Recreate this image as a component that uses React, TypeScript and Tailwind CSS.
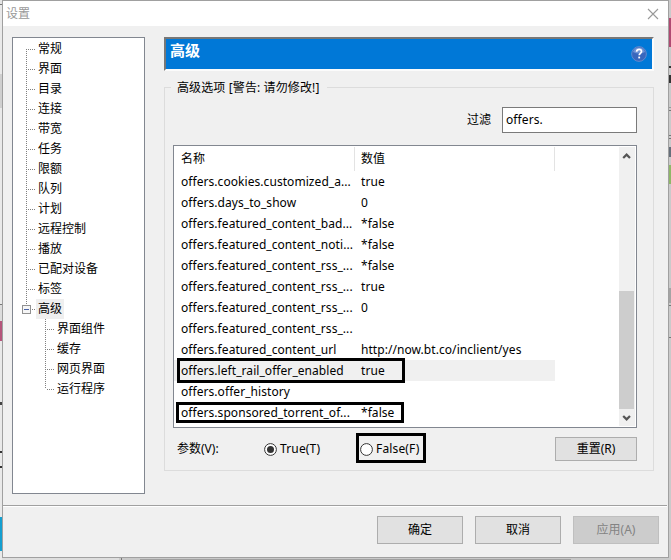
import React from "react";

interface Option {
  name: string;
  value: string;
  selected?: boolean;
}

const treeItems = [
  "常规", "界面", "目录", "连接", "带宽", "任务", "限额", "队列",
  "计划", "远程控制", "播放", "已配对设备", "标签",
];

const subItems = ["界面组件", "缓存", "网页界面", "运行程序"];

const options: Option[] = [
  { name: "offers.cookies.customized_a...", value: "true" },
  { name: "offers.days_to_show", value: "0" },
  { name: "offers.featured_content_bad...", value: "*false" },
  { name: "offers.featured_content_noti...", value: "*false" },
  { name: "offers.featured_content_rss_...", value: "*false" },
  { name: "offers.featured_content_rss_...", value: "true" },
  { name: "offers.featured_content_rss_...", value: "0" },
  { name: "offers.featured_content_rss_...", value: "" },
  { name: "offers.featured_content_url", value: "http://now.bt.co/inclient/yes" },
  { name: "offers.left_rail_offer_enabled", value: "true", selected: true },
  { name: "offers.offer_history", value: "" },
  { name: "offers.sponsored_torrent_of...", value: "*false" },
];

const vDots =
  "w-px bg-[repeating-linear-gradient(to_bottom,#808080_0_1px,transparent_1px_2px)]";
const hDots =
  "h-px bg-[repeating-linear-gradient(to_right,#808080_0_1px,transparent_1px_2px)]";

const LeftEdge: React.FC = () => (
  <div className="flex h-[560px] w-0.5 shrink-0 flex-col bg-[#e9e9e9]">
    <div className="h-1 bg-[#e4e4e4]" />
    <div className="h-px bg-[#777]" />
    <div className="h-[69px]" />
    <div className="h-[34px] bg-[#cfcfcf]" />
    <div className="h-[196px]" />
    <div className="h-px bg-[#777]" />
    <div className="h-4 bg-[#dcdcdc]" />
    <div className="h-5 bg-[#b5557b]" />
    <div className="h-[61px]" />
    <div className="h-[3px] bg-[#444]" />
    <div className="h-[46px]" />
    <div className="h-0.5 bg-[#333]" />
    <div className="h-[13px]" />
    <div className="h-0.5 bg-[#333]" />
    <div className="h-[49px]" />
    <div className="h-[34px] bg-[#149fd0]" />
  </div>
);

const RightEdge: React.FC = () => (
  <div className="flex h-[560px] w-0.5 shrink-0 flex-col bg-[#cacaca]">
    <div className="h-[18px]" />
    <div className="h-[29px] bg-[#b04a72]" />
    <div className="h-[19px]" />
    <div className="h-0.5 bg-[#333]" />
    <div className="h-[7px]" />
    <div className="h-2 bg-[#333]" />
    <div className="h-[24px]" />
    <div className="h-px bg-[#999]" />
    <div className="h-0.5" />
    <div className="h-px bg-[#777]" />
    <div className="h-[24px]" />
    <div className="h-px bg-[#777]" />
    <div className="h-0.5" />
    <div className="h-px bg-[#777]" />
    <div className="h-[8px]" />
    <div className="h-[10px] bg-[#666f7a]" />
    <div className="h-2" />
    <div className="h-[19px] bg-[#8fb768]" />
    <div className="h-[104px]" />
    <div className="h-[15px] bg-[#a4a4a4]" />
    <div className="h-0.5" />
    <div className="h-px bg-[#777]" />
    <div className="h-[31px]" />
    <div className="h-px bg-[#777]" />
  </div>
);

const SettingsTree: React.FC = () => (
  <div className="h-[457px] w-[133px] shrink-0 border border-[#828790] bg-white pt-px">
    {treeItems.map((label, i) => (
      <div key={label} className="flex h-5 items-center pl-[13px]">
        <div className={`${vDots} ${i === 0 ? "h-2.5 self-end" : "h-5"}`} />
        <div className={`${hDots} ml-px w-2`} />
        <span className="ml-0.5">{label}</span>
      </div>
    ))}
    <div className="flex h-5 items-center pl-[9px]">
      <div className="flex h-5 flex-col items-center">
        <div className={`${vDots} h-[5px]`} />
        <svg className="mt-px shrink-0" width="9" height="9" shapeRendering="crispEdges">
          <rect x="0.5" y="0.5" width="8" height="8" rx="1" fill="#f6f6f6" stroke="#919191" />
          <path d="M2 4.5h5" stroke="#4b63a7" />
        </svg>
      </div>
      <div className={`${hDots} ml-px w-[3px]`} />
      <span className="ml-px h-5 bg-[#efefef] px-0.5">高级</span>
    </div>
    {subItems.map((label, i) => (
      <div key={label} className="flex h-5 items-center pl-8">
        <div className={`${vDots} ${i === subItems.length - 1 ? "h-2.5 self-start" : "h-5"}`} />
        <div className={`${hDots} ml-px w-2`} />
        <span className="ml-0.5">{label}</span>
      </div>
    ))}
  </div>
);

const Scrollbar: React.FC = () => (
  <div className="mr-px flex h-[279px] w-4 shrink-0 flex-col bg-[#f0f0f0]">
    <svg width="16" height="17" viewBox="0 0 16 17" fill="none">
      <path d="M4.2 11 7.6 7.6 11 11" stroke="#555" strokeWidth="2.2" />
    </svg>
    <div className="mt-[127px] h-[118px] w-[15px] bg-[#cdcdcd]" />
    <svg width="16" height="17" viewBox="0 0 16 17" fill="none">
      <path d="M4.2 7 7.6 10.4 11 7" stroke="#555" strokeWidth="2.2" />
    </svg>
  </div>
);

const OptionList: React.FC = () => (
  <div className="ml-2 mt-3 flex h-[283px] w-[464px] border border-[#828790] bg-white pt-px">
    <div className="w-[445px]">
      <div className="flex h-6 leading-[23px]">
        <div className="w-[181px] border-r border-[#e3e3e3] pl-[7px]">名称</div>
        <div className="w-[200px] border-r border-[#e3e3e3] pl-1.5">数值</div>
      </div>
      {options.map((option, i) => (
        <div
          key={i}
          className={`flex h-[21px] w-[381px] whitespace-nowrap leading-[21px] tracking-[0.06px] ${
            option.selected ? "bg-[#f0f0f0]" : ""
          }`}
        >
          <span className="w-[187px] shrink-0 pl-[7px]">{option.name}</span>
          <span>{option.value}</span>
        </div>
      ))}
    </div>
    <Scrollbar />
  </div>
);

const Radio: React.FC<{ label: string; checked?: boolean }> = ({ label, checked }) => (
  <label className="flex items-center">
    <svg width="13" height="13" viewBox="0 0 13 13">
      <circle cx="6.5" cy="6.5" r="5.9" fill="#fff" stroke="#333" />
      {checked && <circle cx="6.5" cy="6.5" r="3.5" fill="#333" />}
    </svg>
    <span className="ml-[3px] tracking-[0.15px]">{label}</span>
  </label>
);

const AdvancedPanel: React.FC = () => (
  <div className="ml-[19px] w-[490px] shrink-0">
    <div className="flex h-[34px] justify-between border-2 border-b-[#fbfbfb] border-l-[#777] border-r-[#fbfbfb] border-t-[#777] bg-[#0078d7] pl-1 pr-[5px]">
      <h1 className="text-[15px] font-bold leading-[22px] text-white">高级</h1>
      <svg className="mt-[7px]" width="16" height="16" viewBox="0 0 16 16">
        <circle cx="8" cy="8" r="7.4" fill="#3867bd" stroke="#6e91cf" strokeWidth="0.8" />
        <path d="M2 6a6.3 6.3 0 0 1 12 0q-6 3-12 0" fill="#6d93d6" />
        <path
          d="M5.6 5.8c0-1.7 1.1-2.5 2.5-2.5s2.4.9 2.4 2.2c0 1.7-2.3 1.9-2.3 3.8"
          fill="none"
          stroke="#fff"
          strokeWidth="1.7"
        />
        <rect x="7.3" y="10.6" width="1.8" height="1.8" fill="#fff" />
      </svg>
    </div>

    {/* Group box */}
    <div className="mt-4 h-[384px] w-[490px] border border-[#dcdcdc]">
      <div className="-mt-2.5 ml-1.5 flex h-5 w-[156px] items-center whitespace-nowrap bg-[#f0f0f0] pl-1.5 tracking-[0.12px]">
        高级选项 [警告: 请勿修改!]
      </div>
      <div className="mt-[9px] flex h-[26px] items-center pl-[302px]">
        <span className="w-[35px]">过滤</span>
        <div className="h-[26px] w-[135px] border border-[#7a7a7a] bg-white pl-[3px] leading-[23px] tracking-[0.1px]">
          offers.
        </div>
      </div>
      <OptionList />
      <div className="mt-[9px] flex h-6 items-center pl-3">
        <span className="w-[87px]">参数(V):</span>
        <div className="w-24">
          <Radio label="True(T)" checked />
        </div>
        <div className="w-[195px]">
          <Radio label="False(F)" />
        </div>
        <button className="h-6 w-[82px] border border-[#adadad] bg-[#e1e1e1]">重置(R)</button>
      </div>
    </div>
  </div>
);

const App: React.FC = () => {
  return (
    <div className="relative flex h-[560px] w-[671px] overflow-hidden bg-[#c9c9c9] font-['Noto_Sans','Noto_Sans_CJK_SC',sans-serif] text-[12px] leading-5 text-black">
      <LeftEdge />
      <div className="w-[667px] shrink-0">
        <div className="h-[558px] border border-[#a0a0a0] bg-[#f0f0f0]">
          {/* Title bar */}
          <div className="flex h-[25px] items-center justify-between bg-white pl-[3px] pr-[9px] text-[#999]">
            <span>设置</span>
            <svg width="12" height="12" viewBox="0 0 12 12">
              <path d="M1 1l10 10M11 1 1 11" stroke="#999" strokeWidth="1.1" />
            </svg>
          </div>

          <div className="flex h-[479px] pl-[9px] pt-[11px]">
            <SettingsTree />
            <AdvancedPanel />
          </div>

          <div className="mr-px h-0.5 border-b border-t border-b-white border-t-[#a0a0a0]" />

          <div className="flex justify-end gap-3 pr-[9px] pt-[9px]">
            <button className="h-7 w-[86px] border border-[#adadad] bg-[#e1e1e1]">确定</button>
            <button className="h-7 w-[86px] border border-[#adadad] bg-[#e1e1e1]">取消</button>
            <button className="h-7 w-[86px] border border-[#bfbfbf] bg-[#cccccc] text-[#838383]">
              应用(A)
            </button>
          </div>
        </div>
        <div className="flex h-0.5">
          <div className="w-[117px] bg-[#dedede]" />
          <div className="ml-0.5 w-px bg-[#777]" />
          <div className="ml-[18px] mt-px w-[431px] bg-[#a0a0a0]" />
        </div>
      </div>
      <RightEdge />

      {/* Highlight frames */}
      <div className="absolute left-[177px] top-[358px] h-[25px] w-[228px] border-3 border-black" />
      <div className="absolute left-[176px] top-[402px] h-[21px] w-[228px] border-3 border-black" />
      <div className="absolute left-[356px] top-[433px] h-[30px] w-[70px] border-3 border-black" />
    </div>
  );
};

export default App;
